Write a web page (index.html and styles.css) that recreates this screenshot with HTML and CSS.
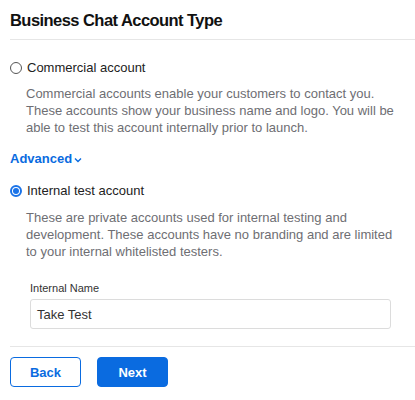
FILE: index.html
```html
<!DOCTYPE html>
<html>
<head>
<meta charset="utf-8">
<link rel="stylesheet" href="styles.css">
</head>
<body>
<div class="page">
  <h1 class="title">Business Chat Account Type</h1>
  <div class="divider"></div>
  <div class="option">
    <label class="radio-row"><span class="radio"></span>Commercial account</label>
    <p class="desc">Commercial accounts enable your customers to contact you. These accounts show your business name and logo. You will be able to test this account internally prior to launch.</p>
  </div>
  <div class="advanced">Advanced<svg class="chev" width="8" height="6" viewBox="0 0 8 6"><path d="M1 1.5 L4 4.5 L7 1.5" fill="none" stroke="#0a6be0" stroke-width="1.4"/></svg></div>
  <div class="option internal">
    <label class="radio-row"><span class="radio checked"></span>Internal test account</label>
    <p class="desc">These are private accounts used for internal testing and development. These accounts have no branding and are limited to your internal whitelisted testers.</p>
    <div class="field">
      <div class="field-label">Internal Name</div>
      <div class="input">Take Test</div>
    </div>
  </div>
  <div class="divider bottom"></div>
  <div class="buttons">
    <button class="btn secondary">Back</button>
    <button class="btn primary">Next</button>
  </div>
</div>
</body>
</html>
```
FILE: styles.css
```css
* { box-sizing: border-box; }
html, body { margin: 0; padding: 0; background: #fff; }
body { font-family: "Liberation Sans", Arial, sans-serif; color: #1d1d1f; }
.page { padding: 10px 0 0 10px; width: 415px; }
.title { font-size: 16.5px; font-weight: bold; margin: 0; line-height: 20px; color: #111; letter-spacing: -0.55px; }
.divider { height: 1px; background: #e6e6e6; margin-top: 9px; }
.option { margin-top: 20px; }
.option.internal { margin-top: 16px; }
.radio-row { display: flex; align-items: center; font-size: 13px; line-height: 16px; color: #222; }
.radio { width: 12px; height: 12px; border: 1px solid #555; border-radius: 50%; margin-right: 5px; flex: none; }
.radio.checked { border: 2px solid #1a73e8; background: #fff; position: relative; }
.radio.checked::after { content: ""; position: absolute; left: 1px; top: 1px; width: 6px; height: 6px; border-radius: 50%; background: #1a73e8; }
.desc { margin: 9px 0 0 16px; font-size: 13px; line-height: 17px; color: #6e6e73; width: 375px; }
.option.internal .desc { margin-top: 10px; }
.advanced { margin-top: 15px; font-size: 13px; font-weight: bold; color: #0a6be0; display: flex; align-items: center; line-height: 16px; }
.chev { margin-left: 2px; margin-top: 2px; }
.field { margin: 21px 0 0 20px; }
.field-label { font-size: 11px; line-height: 14px; color: #333; }
.input { margin-top: 4px; width: 361px; height: 30px; border: 1px solid #dcdcdc; border-radius: 3px; font-size: 13px; padding: 0 6px; display: flex; align-items: center; color: #333; }
.divider.bottom { margin-top: 17px; }
.buttons { display: flex; gap: 16px; margin-top: 10px; }
.btn { width: 71px; height: 30px; border-radius: 4px; font-family: "Liberation Sans", Arial, sans-serif; font-size: 13px; font-weight: bold; cursor: pointer; }
.btn.secondary { background: #fff; border: 1.5px solid #0a6be0; color: #0a6be0; }
.btn.primary { background: #0a6be0; border: 1px solid #0a6be0; color: #fff; }
```
